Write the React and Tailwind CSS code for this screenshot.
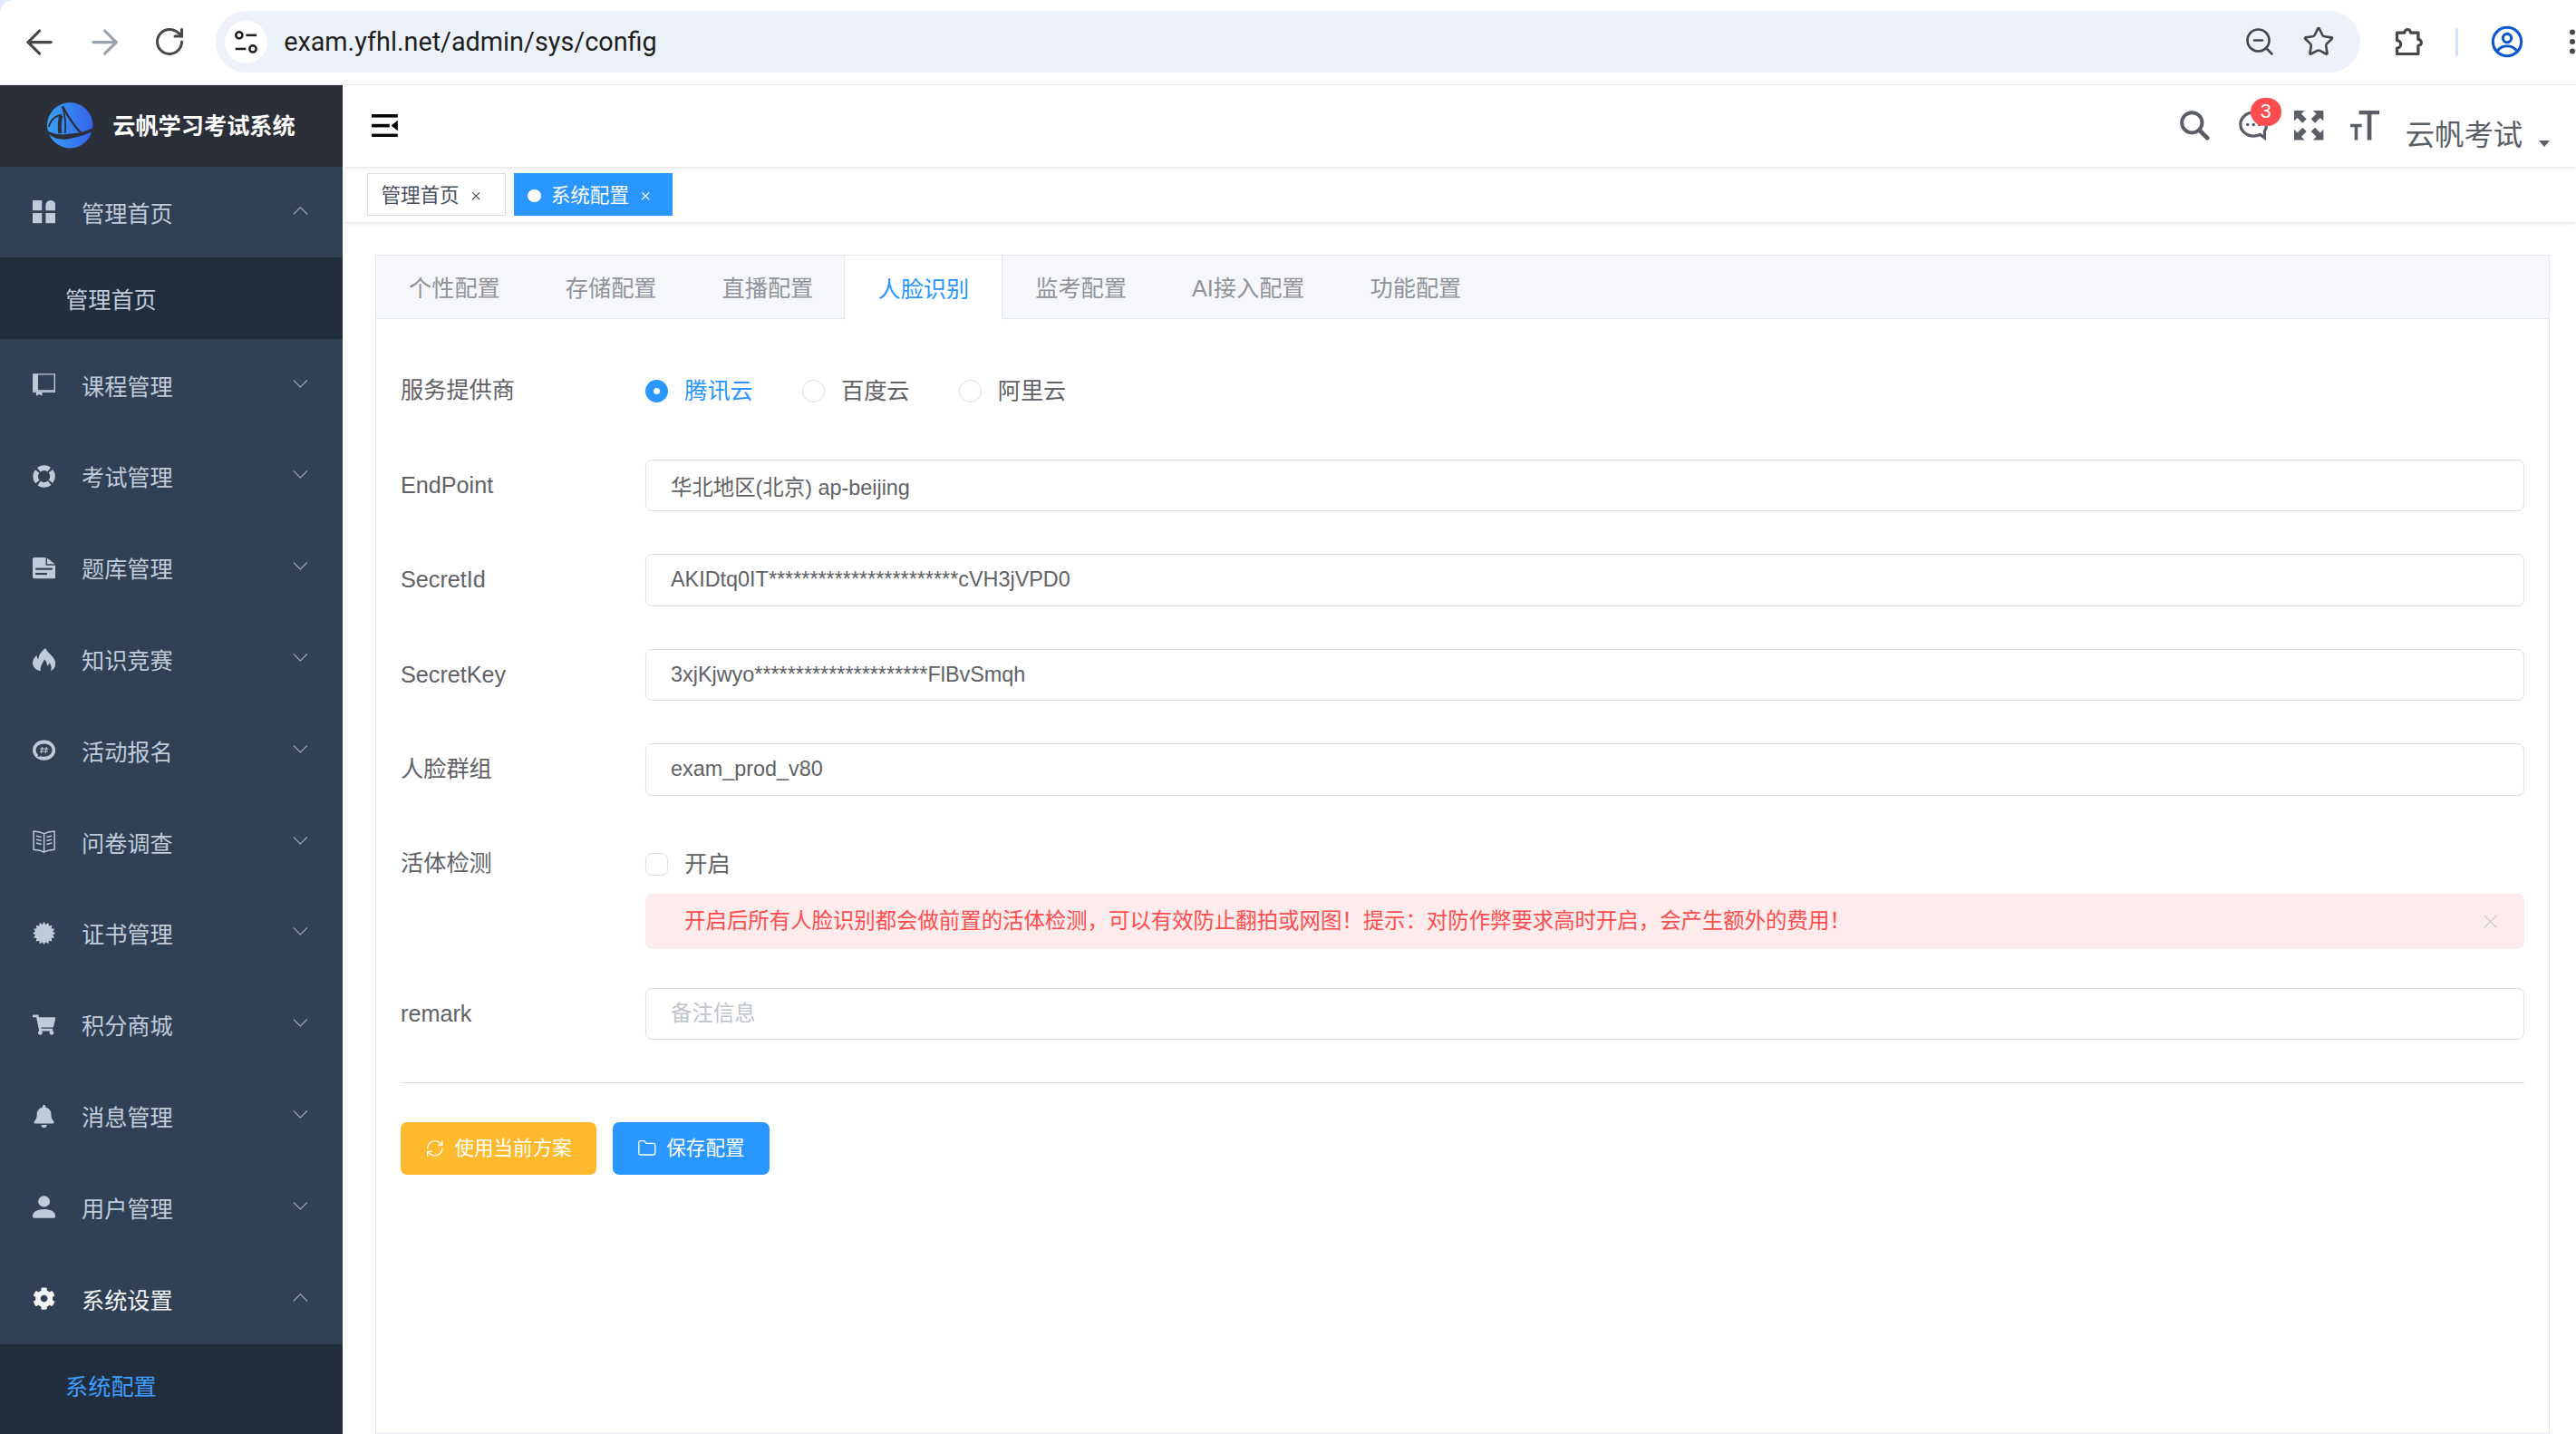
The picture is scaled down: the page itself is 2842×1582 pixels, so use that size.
import { useState } from "react";
import { ArrowLeft, ArrowRight, RotateCw, ZoomOut, Star, EllipsisVertical, X, ChevronDown, ChevronUp, RefreshCw, Folder } from "lucide-react";
import { FaShoppingCart, FaBell, FaCog } from "react-icons/fa";

/* ================= ICONS ================= */

function DashboardIcon() {
  return (
    <svg viewBox="0 0 14 14" fill="currentColor" className="size-3.5">
      <rect x="0" y="0" width="5.7" height="6.2" />
      <path d="M8 3a3 3 0 0 1 6 0v3.2H8z" />
      <rect x="0" y="7.8" width="5.7" height="6.2" />
      <rect x="8" y="7.8" width="6" height="6.2" />
    </svg>
  );
}

function BookIcon() {
  return (
    <svg viewBox="0 0 14 14" fill="none" stroke="currentColor" className="size-3.5">
      <path d="M.5.5h13v10H.5z" strokeWidth="0.8" />
      <path d="M.5.5h2.6v10H.5z" fill="currentColor" strokeWidth="0.5" />
      <path d="M0 11.2h14" strokeWidth="0.9" />
      <path d="M2.2 11.5h3.6v2.3L4 12.8l-1.8 1z" fill="currentColor" stroke="none" />
    </svg>
  );
}

function RingIcon() {
  return (
    <svg viewBox="0 0 14 14" fill="none" className="size-3.5">
      <circle cx="7" cy="7" r="5.2" stroke="currentColor" strokeWidth="3.2" strokeDasharray="6.8 1.37" transform="rotate(50 7 7)" />
    </svg>
  );
}

function DocIcon() {
  return (
    <svg viewBox="0 0 14 14" className="size-3.5">
      <path d="M1 .5h7.5L14 5v7.5a1 1 0 0 1-1 1H1a1 1 0 0 1-1-1v-11a1 1 0 0 1 1-1z" fill="currentColor" />
      <path d="M8.5 .5V5H14" fill="none" stroke="#304156" strokeWidth="0.8" />
      <rect x="1.8" y="7" width="10.4" height="1.2" fill="#304156" />
      <rect x="1.8" y="10" width="7" height="1.2" fill="#304156" />
    </svg>
  );
}

function FlameIcon() {
  return (
    <svg viewBox="0 0 14 14" fill="currentColor" className="size-3.5">
      <path d="M8 0c.4 2.6 5.6 4.8 6 9.2.2 2.4-1.2 4-3 4.8.8-1.6.6-3.4-.8-5-.2 1-.8 1.6-1.4 1.8.2-1.6-.6-3-1.8-3.8C7 8.8 4.2 10.6 5 14 2 13.6 0 11.6 0 9.2 0 7 1.2 5.4 2.6 4.4c-.1 1.2.3 2 1 2.4C3.6 4 5.8 1.4 8 0z" />
    </svg>
  );
}

function ChatHashIcon() {
  return (
    <svg viewBox="0 0 14 14" className="size-3.5">
      <ellipse cx="7" cy="7" rx="7" ry="6.2" fill="currentColor" />
      <path d="M7 3c-2.8 0-5 1.7-5 4 0 1.2.6 2.2 1.4 2.9l-.4 1.3 1.7-.5c.7.2 1.5.3 2.3.3 2.8 0 5-1.7 5-4s-2.2-4-5-4z" fill="#304156" />
      <path d="M5.9 5l-.6 4M8.5 5l-.6 4M4.6 6.2h5M4.4 7.8h5" stroke="currentColor" strokeWidth="0.6" fill="none" />
    </svg>
  );
}

function OpenBookIcon() {
  return (
    <svg viewBox="0 0 14 14" fill="none" stroke="currentColor" strokeWidth="0.8" className="size-3.5">
      <path d="M7 2.2C5.2 1.2 3 .8.6.6v11.2c2.4.2 4.6.6 6.4 1.6 1.8-1 4-1.4 6.4-1.6V.6C11 .8 8.8 1.2 7 2.2zM7 2.2v11.2" />
      <path d="M2.2 3.4l3.2.8M2.2 5.6l3.2.8M2.2 7.8l3.2.8M11.8 3.4l-3.2.8M11.8 5.6l-3.2.8M11.8 7.8l-3.2.8" />
    </svg>
  );
}

function SealIcon() {
  // 16 point seal
  const points = [];
  for (let i = 0; i < 32; i++) {
    const r = i % 2 === 0 ? 7 : 5.4;
    const a = (i * Math.PI) / 16;
    points.push(`${(7 + r * Math.cos(a)).toFixed(2)},${(7 + r * Math.sin(a)).toFixed(2)}`);
  }
  return (
    <svg viewBox="0 0 14 14" fill="currentColor" className="size-3.5">
      <polygon points={points.join(" ")} />
    </svg>
  );
}

function UserIcon() {
  return (
    <svg viewBox="0 0 14 14" fill="currentColor" className="size-3.5">
      <ellipse cx="7" cy="3.6" rx="3.6" ry="3.4" />
      <path d="M0 12.6C0 10 3 8.4 7 8.4s7 1.6 7 4.2c0 .8-.4 1.2-1.2 1.2H1.2C.4 13.8 0 13.4 0 12.6z" />
    </svg>
  );
}

function Logo() {
  return (
    <svg viewBox="0 0 28 28" className="size-7">
      <defs>
        <linearGradient id="logoBlue" x1="0" y1="0" x2="1" y2="0">
          <stop offset="0" stopColor="#3aa0f5" />
          <stop offset="1" stopColor="#3463ea" />
        </linearGradient>
      </defs>
      <circle cx="14" cy="14" r="14" fill="url(#logoBlue)" />
      <g fill="none" stroke="#2b2f3a">
        <path d="M9.5 2.5C11 8 11.6 13 11 19" strokeWidth="1" />
        <path d="M9.5 2.5C13 9 16.5 14.5 21 19" strokeWidth="1.3" />
        <path d="M1 15C2.5 10 5 8.5 9 7.5" strokeWidth="1" />
        <path d="M8.5 8C7.5 12 7.5 16 8 19" strokeWidth="2.2" />
      </g>
      <path d="M0 17C3 19.5 8 20 12 19.5L21 18.5 27.6 15.8 28 18C22 20 18 21.5 12 22.5 7 23 3 21.5.8 19z" fill="#2b2f3a" />
    </svg>
  );
}

function TuneIcon() {
  return (
    <svg viewBox="0 0 16 16" fill="none" stroke="#1f1f1f" strokeWidth="1.4" className="size-4">
      <circle cx="3.8" cy="3.8" r="2" />
      <path d="M8 3.8h6.5" />
      <path d="M1.5 12.2H8" />
      <circle cx="12.2" cy="12.2" r="2" />
    </svg>
  );
}

function ExtensionIcon() {
  return (
    <svg viewBox="0 0 20 20" fill="none" stroke="currentColor" strokeWidth="1.8" strokeLinejoin="round" className="ml-5 size-5 shrink-0">
      <path d="M2.5 4.5h4.6a1.9 1.9 0 1 1 3.8 0h4.6v4.1a1.9 1.9 0 1 1 0 3.8v5.1H2.5v-3.6a2.3 2.3 0 0 0 0-4.6z" />
    </svg>
  );
}

function ProfileIcon() {
  return (
    <svg viewBox="0 0 20 20" fill="none" stroke="#0b57d0" strokeWidth="1.7" className="size-5 shrink-0">
      <circle cx="10" cy="10" r="8.7" />
      <circle cx="10" cy="7.8" r="2.6" />
      <path d="M4 15.6c1.6-2.2 3.8-3 6-3s4.4.8 6 3" />
    </svg>
  );
}

function SearchIcon() {
  return (
    <svg viewBox="0 0 18 18" fill="none" stroke="currentColor" className="mr-0.5 size-[18px]">
      <circle cx="7.4" cy="7.4" r="6.2" strokeWidth="2.2" />
      <path d="M12 12l4.8 4.8" strokeWidth="2.6" strokeLinecap="round" />
    </svg>
  );
}

function MessageIcon() {
  return (
    <svg viewBox="0 0 18 18" className="size-[18px]">
      <path d="M9 1.2C4.6 1.2 1 4.4 1 8.4s3.6 7.2 8 7.2c1.4 0 2.8-.3 4-.9l2.8 2V12.6c.8-1.2 1.2-2.7 1.2-4.2" fill="none" stroke="currentColor" strokeWidth="1.8" />
      <circle cx="5.4" cy="8.6" r="1" fill="currentColor" />
      <circle cx="9" cy="8.6" r="1" fill="currentColor" />
      <circle cx="12.6" cy="8.6" r="1" fill="currentColor" />
    </svg>
  );
}

function FullscreenIcon() {
  const corner = "M0 0h6.4L4.4 2 7.6 5.2 5.2 7.6 2 4.4 0 6.4z";
  return (
    <svg viewBox="0 0 18 18" fill="currentColor" className="size-[18px]">
      <path d={corner} />
      <path d={corner} transform="rotate(90 9 9)" />
      <path d={corner} transform="rotate(180 9 9)" />
      <path d={corner} transform="rotate(270 9 9)" />
    </svg>
  );
}

function TextSizeIcon() {
  return (
    <svg viewBox="0 0 18 18" fill="currentColor" className="size-[18px]">
      <path d="M5.4 0H18v2.4h-5v15.6h-2.6V2.4h-5z" />
      <path d="M0 8.2h7v2H4.6V18H2.6v-7.8H0z" />
    </svg>
  );
}

function CollapseIcon() {
  return (
    <svg viewBox="0 0 16 14" fill="currentColor" className="h-3.5 w-4">
      <rect width="16" height="2" />
      <rect y="6" width="11" height="2" />
      <rect y="12" width="16" height="2" />
      <path d="M16 3.8v6.4L12 7z" />
    </svg>
  );
}

/* ================= BROWSER BAR ================= */

function BrowserBar() {
  return (
    <div className="bg-blue-100">
      <div className="flex h-13 items-center rounded-tl-lg border-b border-gray-200 bg-white pl-3 text-[#474747]">
        <div className="flex items-center gap-4">
          <ArrowLeft className="size-6" strokeWidth={1.75} />
          <ArrowRight className="size-6 text-gray-400" strokeWidth={1.75} />
          <RotateCw className="mx-0.5 size-5" strokeWidth={2} />
        </div>

        <div className="ml-4 flex h-[38px] min-w-0 flex-1 items-center rounded-full bg-[#edf2fa] pl-1.5 pr-4">
          <span className="flex size-[26px] items-center justify-center rounded-full bg-white">
            <TuneIcon />
          </span>
          <span className="ml-2.5 flex-1 font-['Roboto',sans-serif] text-base text-[#1f1f1f]">exam.yfhl.net/admin/sys/config</span>
          <div className="flex items-center gap-4">
            <ZoomOut className="size-5" strokeWidth={1.75} />
            <Star className="size-5" strokeWidth={1.75} />
          </div>
        </div>

        <ExtensionIcon />
        <span className="ml-4.5 h-[17px] w-0.5 shrink-0 rounded-full bg-[#d3e3fd]" />
        <span className="ml-5">
          <ProfileIcon />
        </span>
        <EllipsisVertical className="ml-5 -mr-2 size-5 shrink-0" strokeWidth={2} />
      </div>
    </div>
  );
}

/* ================= SIDEBAR ================= */

const menus = [
  { name: "管理首页", icon: <DashboardIcon />, open: true, sub: [{ name: "管理首页" }] },
  { name: "课程管理", icon: <BookIcon /> },
  { name: "考试管理", icon: <RingIcon /> },
  { name: "题库管理", icon: <DocIcon /> },
  { name: "知识竞赛", icon: <FlameIcon /> },
  { name: "活动报名", icon: <ChatHashIcon /> },
  { name: "问卷调查", icon: <OpenBookIcon /> },
  { name: "证书管理", icon: <SealIcon /> },
  { name: "积分商城", icon: <FaShoppingCart className="size-3.5" /> },
  { name: "消息管理", icon: <FaBell className="size-3.5" /> },
  { name: "用户管理", icon: <UserIcon /> },
  { name: "系统设置", icon: <FaCog className="size-3.5" />, open: true, active: true, sub: [{ name: "系统配置", active: true }] },
];

function Sidebar() {
  return (
    <aside className="w-[210px] shrink-0 overflow-hidden bg-[#304156] text-sm text-[#bfcbd9]">
      <div className="flex h-[50px] items-center justify-center gap-3 bg-[#2b2f3a]">
        <Logo />
        <span className="text-sm font-semibold text-white">云帆学习考试系统</span>
      </div>

      {menus.map((m) => (
        <div key={m.name}>
          <div className={`flex h-14 items-center px-5 ${m.active ? "text-gray-100" : ""}`}>
            <span className="mr-4">{m.icon}</span>
            <span className="mt-0.5 flex-1">{m.name}</span>
            {m.open ? (
              <ChevronUp className="-mr-0.5 -mt-0.5 size-4 text-gray-400" strokeWidth={1} />
            ) : (
              <ChevronDown className="-mr-0.5 -mt-0.5 size-4 text-gray-400" strokeWidth={1} />
            )}
          </div>

          {m.sub &&
            m.sub.map((s) => (
              <div
                key={s.name}
                className={`flex h-[50px] items-center bg-[#1f2d3d] pl-10 pt-0.5 ${s.active ? "text-[#409eff]" : ""}`}
              >
                {s.name}
              </div>
            ))}
        </div>
      ))}
      <div className="h-[50px] bg-[#1f2d3d]" />
    </aside>
  );
}

/* ================= NAVBAR + TAGS ================= */

function Navbar() {
  return (
    <div className="relative z-20 flex h-[50px] shrink-0 items-center justify-between bg-white pl-4.5 pr-4 shadow-sm">
      <span className="text-black">
        <CollapseIcon />
      </span>

      <div className="flex items-center gap-4 text-[#5a5e66]">
        <SearchIcon />
        <div className="relative">
          <MessageIcon />
          <span className="absolute -right-2 -top-2 flex h-[17px] w-[19px] items-center justify-center rounded-full bg-[#ff4d4f] text-xs text-white">
            3
          </span>
        </div>
        <FullscreenIcon />
        <TextSizeIcon />
        <div className="mt-3 flex items-center gap-2.5">
          <span className="text-lg">云帆考试</span>
          <span className="mt-2.5 size-0 border-x-[3.5px] border-t-4 border-x-transparent border-t-[#5a5e66]" />
        </div>
      </div>
    </div>
  );
}

function Tag({ title, active }) {
  return (
    <div
      className={`flex h-[26px] items-center border pl-2 pt-0.5 text-xs ${
        active ? "border-[#2a96ff] bg-[#2a96ff] pr-2 text-white" : "border-[#d8dce5] bg-white pr-2.5 text-[#495060]"
      }`}
    >
      {active && <span className="mr-1.5 size-2 rounded-full bg-white" />}
      {title}
      <span className="ml-0.5 flex size-4 items-center justify-center">
        <X className="size-2" strokeWidth={2} />
      </span>
    </div>
  );
}

function TagsView() {
  return (
    <div className="relative z-10 flex h-[34px] shrink-0 gap-[5px] bg-white pl-[15px] pt-1 shadow-sm">
      <Tag title="管理首页" />
      <Tag title="系统配置" active />
    </div>
  );
}

/* ================= CONFIG FORM ================= */

const tabs = ["个性配置", "存储配置", "直播配置", "人脸识别", "监考配置", "AI接入配置", "功能配置"];

function Field({ label, children }) {
  return (
    <div className="flex">
      <label className="w-[150px] shrink-0 text-sm leading-8 text-[#606266]">{label}</label>
      <div className="min-w-0 flex-1">{children}</div>
    </div>
  );
}

function TextInput({ value, placeholder }) {
  return (
    <input
      readOnly
      value={value}
      placeholder={placeholder}
      className="block h-8 w-full rounded border border-[#dcdfe6] bg-white px-[15px] text-[13px] text-[#606266] outline-none placeholder:text-[#c0c4cc]"
    />
  );
}

function Radio({ label, checked }) {
  return (
    <div className={`flex items-center gap-2.5 text-sm ${checked ? "text-[#2a96ff]" : "text-[#606266]"}`}>
      {checked ? (
        <span className="flex size-3.5 items-center justify-center rounded-full bg-[#2a96ff]">
          <span className="size-1 rounded-full bg-white" />
        </span>
      ) : (
        <span className="size-3.5 rounded-full border border-[#dcdfe6] bg-white" />
      )}
      {label}
    </div>
  );
}

function ConfigCard() {
  const [current] = useState("人脸识别");

  return (
    <div className="h-full border border-[#e4e7ed] bg-white">
      <div className="flex h-[39px] border-b border-[#e4e7ed] bg-[#f5f7fa] text-sm text-[#909399]">
        {tabs.map((t) => (
          <div
            key={t}
            className={
              t === current
                ? "-mb-px -ml-px flex items-center border-x border-[#e4e7ed] bg-white px-5 pt-0.5 text-[#2a96ff]"
                : "flex items-center px-5 pt-0.5"
            }
          >
            {t}
          </div>
        ))}
      </div>

      <div className="flex flex-col gap-[26px] px-[15px] pt-7">
        <Field label="服务提供商">
          <div className="flex h-8 items-center gap-[30px]">
            <Radio label="腾讯云" checked />
            <Radio label="百度云" />
            <Radio label="阿里云" />
          </div>
        </Field>

        <Field label="EndPoint">
          <TextInput value="华北地区(北京) ap-beijing" />
        </Field>
        <Field label="SecretId">
          <TextInput value="AKIDtq0IT***********************cVH3jVPD0" />
        </Field>
        <Field label="SecretKey">
          <TextInput value="3xjKjwyo*********************FlBvSmqh" />
        </Field>
        <Field label="人脸群组">
          <TextInput value="exam_prod_v80" />
        </Field>

        <Field label="活体检测">
          <div className="flex h-8 items-center gap-2.5 text-sm text-[#606266]">
            <span className="size-3.5 rounded-sm border border-[#dcdfe6] bg-white" />
            开启
          </div>
          <div className="-mb-0.5 mt-0.5 flex h-[34px] items-center justify-between rounded bg-[#feecec] pl-6 pr-4 text-[13px] text-[#ff4d4f]">
            开启后所有人脸识别都会做前置的活体检测，可以有效防止翻拍或网图！提示：对防作弊要求高时开启，会产生额外的费用！
            <X className="-mr-0.5 size-3.5 text-[#c0c4cc]" strokeWidth={1} />
          </div>
        </Field>

        <Field label="remark">
          <TextInput value="" placeholder="备注信息" />
        </Field>

        <div className="flex flex-col gap-6">
          <hr className="border-[#dcdfe6]" />
          <div className="flex gap-2.5">
            <button className="flex h-8 items-center gap-1.5 rounded bg-[#ffb92c] px-[15px] text-xs text-white">
              <RefreshCw className="size-3" strokeWidth={1.5} />
              使用当前方案
            </button>
            <button className="flex h-8 items-center gap-1.5 rounded bg-[#2a96ff] px-[15px] text-xs text-white">
              <Folder className="size-3" strokeWidth={1.5} />
              保存配置
            </button>
          </div>
        </div>
      </div>
    </div>
  );
}

/* ================= PAGE ================= */

export default function App() {
  return (
    <div className="h-screen overflow-hidden bg-white">
      <div className="flex h-[879px] flex-col font-['Liberation_Sans','Noto_Sans_CJK_SC',sans-serif] [zoom:1.8]">
        <BrowserBar />

        <div className="flex min-h-0 flex-1">
          <Sidebar />

          <div className="flex min-w-0 flex-1 flex-col">
            <Navbar />
            <TagsView />
            <main className="min-h-0 flex-1 pl-5 pr-4 pt-5">
              <ConfigCard />
            </main>
          </div>
        </div>
      </div>
    </div>
  );
}
